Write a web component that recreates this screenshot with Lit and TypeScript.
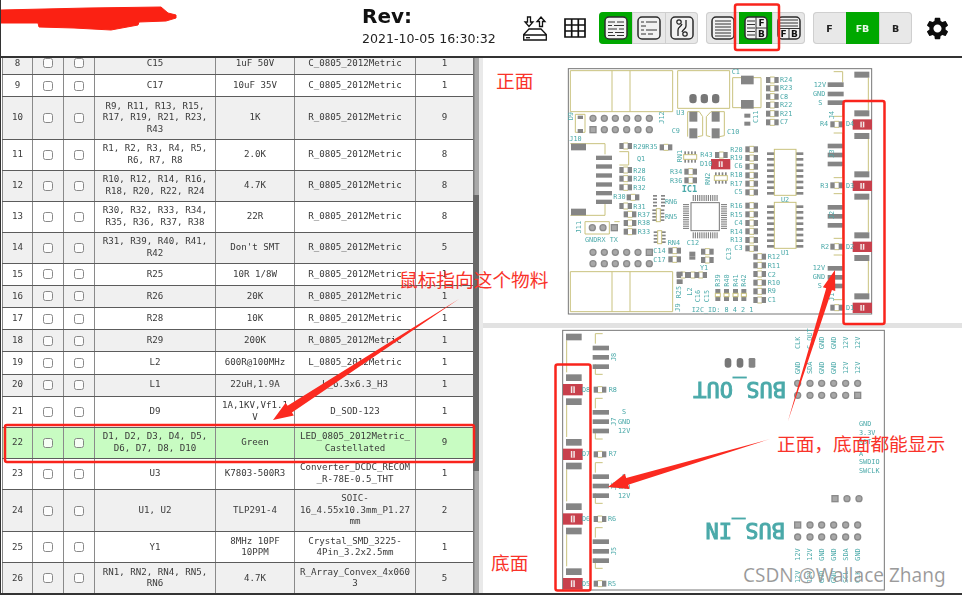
import { LitElement, html, css, svg } from 'lit';
import { customElement } from 'lit/decorators.js';

// num, references, value, footprint, quantity
const rows: [number, string, string, string, number][] = [
  [8, 'C15', '1uF 50V', 'C_0805_2012Metric', 1],
  [9, 'C17', '10uF 35V', 'C_0805_2012Metric', 1],
  [10, 'R9, R11, R13, R15,\nR17, R19, R21, R23,\nR43', '1K', 'R_0805_2012Metric', 9],
  [11, 'R1, R2, R3, R4, R5,\nR6, R7, R8', '2.0K', 'R_0805_2012Metric', 8],
  [12, 'R10, R12, R14, R16,\nR18, R20, R22, R24', '4.7K', 'R_0805_2012Metric', 8],
  [13, 'R30, R32, R33, R34,\nR35, R36, R37, R38', '22R', 'R_0805_2012Metric', 8],
  [14, 'R31, R39, R40, R41,\nR42', "Don't SMT", 'R_0805_2012Metric', 5],
  [15, 'R25', '10R 1/8W', 'R_0805_2012Metric', 1],
  [16, 'R26', '20K', 'R_0805_2012Metric', 1],
  [17, 'R28', '10K', 'R_0805_2012Metric', 1],
  [18, 'R29', '200K', 'R_0805_2012Metric', 1],
  [19, 'L2', '600R@100MHz', 'L_0805_2012Metric', 1],
  [20, 'L1', '22uH,1.9A', 'L_6.3x6.3_H3', 1],
  [21, 'D9', '1A,1KV,Vf1.1\nV', 'D_SOD-123', 1],
  [22, 'D1, D2, D3, D4, D5,\nD6, D7, D8, D10', 'Green', 'LED_0805_2012Metric_\nCastellated', 9],
  [23, 'U3', 'K7803-500R3', 'Converter_DCDC_RECOM\n_R-78E-0.5_THT', 1],
  [24, 'U1, U2', 'TLP291-4', 'SOIC-\n16_4.55x10.3mm_P1.27\nmm', 2],
  [25, 'Y1', '8MHz 10PF\n10PPM', 'Crystal_SMD_3225-\n4Pin_3.2x2.5mm', 1],
  [26, 'RN1, RN2, RN4, RN5,\nRN6', '4.7K', 'R_Array_Convex_4x060\n3', 5],
];

type Box = [number, number, number, number];
type Label = [string, number, number, number?];

const pads = (list: Box[]) => list.map(([x, y, w, h]) => svg`<rect class="pad" x=${x} y=${y} width=${w} height=${h} />`);
const stack = (x: number, w: number, h: number, ys: number[]) => pads(ys.map((y): Box => [x, y, w, h]));
const silk = (list: string[]) => list.map((p) => svg`<polyline class="silk" points=${p} />`);
const labels = (list: Label[]) =>
  list.map(([t, x, y, rot]) =>
    rot === undefined
      ? svg`<text class="ref" x=${x} y=${y}>${t}</text>`
      : svg`<text class="ref" x=${x} y=${y} transform="rotate(${rot} ${x} ${y})">${t}</text>`
  );
// two pad resistor footprint, x is the left edge, y the centre
const res = (x: number, y: number) => svg`
  <polyline class="silk" points="${x + 12},${y - 9} ${x + 26},${y - 9}" />
  <polyline class="silk" points="${x + 12},${y + 9} ${x + 26},${y + 9}" />
  <rect class="pad" x=${x} y=${y - 9} width="13" height="18" />
  <rect class="pad" x=${x + 25} y=${y - 9} width="13" height="18" />`;
const hole = (x: number, y: number, square = false) =>
  square
    ? svg`<rect class="hole" x=${x - 9} y=${y - 9} width="18" height="18" />`
    : svg`<circle class="hole" cx=${x} cy=${y} r="9" />`;
const led = (x: number, y: number, w = 58, h = 31) => svg`
  <rect class="led" x=${x} y=${y} width=${w} height=${h} />
  <rect x=${x + w / 2 - 6} y=${y + 7} width="12" height=${h - 14} fill="#f3e9e9" />
  <rect x=${x + w / 2 - 1.5} y=${y + 7} width="3" height=${h - 14} fill="#c8404c" />`;
const soic = (top: number) => svg`
  ${stack(858, 22, 8, [0, 1, 2, 3, 4, 5, 6, 7].map((i) => top + 9 + i * 17))}
  ${stack(945, 22, 8, [0, 1, 2, 3, 4, 5, 6, 7].map((i) => top + 9 + i * 17))}
  <rect class="silk" x="880" y=${top} width="65" height="138" />`;
const array = (x: number, y: number, vertical = false) =>
  vertical
    ? svg`${stack(x, 12, 5, [y, y + 10, y + 20, y + 30])}${stack(x + 24, 12, 5, [y, y + 10, y + 20, y + 30])}
        <rect class="silk" x=${x + 12} y=${y - 2} width="12" height="39" />`
    : svg`${[0, 1, 2, 3].map((i) => svg`<rect class="pad" x=${x + i * 10} y=${y} width="5" height="10" /><rect class="pad" x=${x + i * 10} y=${y + 24} width="5" height="10" />`)}
        <rect class="silk" x=${x - 2} y=${y + 10} width="39" height="14" />`;

function frontBoard() {
  const qfp = [0, 1, 2, 3, 4, 5, 6, 7, 8, 9, 10, 11];
  return svg`
    <svg viewBox="6 9 1440 792" width="480" height="264">
      <rect x="262" y="41" width="910" height="736" fill="#fff" stroke="#777" stroke-width="3" />
      ${silk([
        '268,47 575,47 575,170 268,170 268,47', '393,47 393,170', '447,47 447,170',
        '268,650 575,650 575,770 268,770 268,650', '393,650 393,770', '447,650 447,770',
        '590,47 746,47 746,160 590,160 590,47',
        '755,68 840,68 840,158 755,158 755,68',
        '268,266 372,266 372,298', '268,481 372,481 372,440',
        '283,178 312,178 312,232 283,232 283,178',
        '415,290 443,290 443,330 415,330',
        '620,170 655,170 665,185 665,242 650,245', '620,170 620,245',
        '676,185 690,170 730,170 730,242 715,245', '676,185 676,242 688,245',
        '312,500 385,500 385,537 312,537 312,500', '400,500 416,500',
        ...[50, 234, 416, 600].flatMap((b) => [
          `1058,${b} 1085,${b} 1085,${b + 32}`,
          `1085,${b + 102} 1085,${b + 134} 1058,${b + 134}`,
          `1162,${b + 18} 1162,${b + 116}`,
        ]),
      ])}
      ${stack(1120, 45, 18, [50, 166, 234, 349, 416, 532, 600, 715])}
      ${stack(1040, 48, 14, [82, 110, 136, 266, 293, 320, 450, 477, 504, 633, 660, 686])}
      ${pads([[270, 266, 45, 20], [270, 461, 45, 20], [290, 182, 16, 10], [290, 222, 16, 12], [780, 62, 38, 26], [780, 135, 38, 26], [790, 176, 18, 12], [790, 200, 18, 12]])}
      ${stack(345, 48, 13, [302, 328, 355, 382, 408, 434])}
      ${[625, 659, 693].map((x) => svg`<rect x=${x} y="117" width="22" height="28" rx="10" fill="#777" />`)}
      ${pads([[625, 170, 24, 30], [625, 220, 24, 30], [692, 170, 24, 30], [692, 220, 24, 30]])}
      ${[336, 370, 403, 437, 471, 505].map((x) => svg`${hole(x, 190)}${hole(x, 224, x === 336)}${hole(x, 592, x === 505)}${hole(x, 626)}`)}
      ${hole(334, 518)}${hole(366, 518)}${hole(400, 518, true)}
      ${[75, 100, 125, 150, 176, 202].map((y) => res(855, y))}
      ${[283, 309, 335, 361, 386, 412, 452, 478, 504, 529, 555, 580].map((y) => res(793, y))}
      ${[605, 631, 657, 683, 709, 735].map((y) => res(817, y))}
      ${([[415, 273], [536, 277], [415, 345], [415, 371], [415, 397], [437, 427], [415, 453], [428, 478], [428, 504], [428, 530], [610, 350], [610, 376], [702, 300], [562, 587], [562, 613], [587, 660], [617, 660], [640, 660], [660, 590], [660, 615], [1048, 208], [1048, 391], [1048, 575], [1048, 758]] as [number, number][]).map(([x, y]) => res(x, y))}
      ${[703, 729, 756, 781].map((x) => svg`${pads([[x, 702, 15, 13], [x, 725, 15, 13]])}<rect class="silk" x=${x} y="715" width="15" height="10" />`)}
      ${pads([[587, 650, 18, 14], [587, 673, 18, 14], [625, 590, 18, 14], [625, 604, 18, 10]])}
      ${stack(516, 12, 5, [420, 430, 440, 450])}${stack(540, 12, 5, [420, 430, 440, 450])}
      ${array(514, 463, true)}${array(518, 529, true)}${array(610, 289)}${array(702, 352)}
      <rect x="630" y="443" width="85" height="84" fill="#fff" stroke="#777" stroke-width="3" />
      ${qfp.map((i) => svg`
        <rect class="pad" x=${635 + i * 6.5} y="420" width="3.5" height="18" />
        <rect class="pad" x=${635 + i * 6.5} y="532" width="3.5" height="18" />
        <rect class="pad" x="606" y=${447 + i * 6.5} width="18" height="3.5" />
        <rect class="pad" x="720" y=${447 + i * 6.5} width="18" height="3.5" />`)}
      ${soic(283)}${soic(442)}
      ${led(690, 312)}${led(1115, 193)}${led(1115, 377)}${led(1115, 560)}${led(1115, 743)}
      ${labels([
        ['R24', 897, 81], ['R23', 897, 106], ['C8', 897, 131], ['R22', 897, 157], ['R21', 897, 182], ['C7', 897, 208],
        ['R20', 748, 291], ['R19', 748, 314], ['C6', 760, 340], ['R18', 748, 366], ['R17', 748, 392], ['C5', 760, 417],
        ['R16', 748, 459], ['R15', 748, 485], ['C4', 760, 511], ['R14', 748, 536], ['R13', 748, 561], ['C3', 760, 586],
        ['R12', 860, 612], ['R11', 860, 639], ['C2', 860, 665], ['R10', 860, 691], ['R9', 860, 715], ['C1', 860, 741],
        ['R29', 457, 281], ['R35', 493, 281], ['R28', 457, 353], ['R26', 457, 379], ['R32', 457, 405], ['Q1', 468, 317],
        ['R30', 397, 433], ['R31', 457, 461], ['R37', 470, 485], ['R38', 470, 511], ['R33', 470, 536],
        ['R34', 567, 357], ['R36', 567, 383], ['R43', 658, 307], ['D10', 657, 333], ['RN6', 552, 447], ['RN5', 552, 491],
        ['RN4', 560, 571], ['C12', 617, 571], ['C14', 517, 594], ['C17', 517, 621], ['GNDRX TX', 312, 561],
        ['U2', 900, 441], ['U1', 900, 600], ['C9', 572, 233], ['C10', 738, 237], ['U3', 586, 179], ['C1', 752, 56],
        ['J10', 265, 258], ['Y1', 657, 645], ['I2C_ID: 8 4 2 1', 632, 771],
        ['12V', 998, 97], ['GND', 996, 123], ['S', 1012, 150], ['R4', 1017, 213], ['D4', 1095, 214],
        ['R3', 1018, 398], ['D3', 1095, 398], ['R2', 1020, 582], ['D2', 1095, 582], ['12V', 995, 646], ['GND', 995, 673],
        ['S', 1010, 700], ['D1', 1095, 765],
        ['C11', 830, 204, -90], ['J12', 548, 206, -90], ['D9', 277, 196, -90], ['J11', 300, 535, -90], ['RN1', 603, 322, -90],
        ['RN2', 688, 390, -90], ['C13', 750, 615, -90], ['R25', 600, 730, -90], ['L2', 632, 722, -90], ['C16', 656, 742, -90],
        ['C15', 684, 742, -90], ['J9', 596, 770, -90], ['R39', 717, 695, -90], ['R40', 743, 695, -90], ['R41', 770, 695, -90],
        ['R42', 795, 695, -90], ['J4', 1060, 192, -90], ['J3', 1060, 308, -90], ['J2', 1060, 492, -90], ['J1', 1060, 738, -90],
      ])}
      <text class="ref big" x="602" y="412">IC1</text>
    </svg>`;
}

function backBoard() {
  const tx = [950, 987, 1022, 1058, 1094, 1130];
  return svg`
    <svg viewBox="6 9 1440 792" width="480" height="264">
      <rect x="245" y="16" width="965" height="779" fill="#fff" stroke="#777" stroke-width="3" />
      ${silk([26, 220, 413, 608].flatMap((b) => [
        `365,${b} 343,${b} 343,${b + 30}`,
        `343,${b + 92} 343,${b + 122} 365,${b + 122}`,
        `257,${b + 20} 257,${b + 116}`,
      ]))}
      ${stack(255, 47, 20, [26, 148, 220, 342, 413, 535, 608, 730])}
      ${stack(335, 49, 14, [62, 90, 118, 255, 283, 311, 448, 476, 505, 643, 672, 700])}
      ${[194, 388, 582, 776].map((y) => res(338, y))}
      ${[177, 371, 565, 759].map((y) => led(246, y, 59, 34))}
      ${[731, 767].map((x) => svg`<rect x=${x} y="99" width="20" height="29" rx="9" fill="#777" />`)}
      <rect class="pad" x="803" y="99" width="20" height="29" rx="4" />
      ${tx.map((x, i) => svg`${hole(x, 175)}${hole(x, 211, i === 5)}${hole(x, 600, i === 0)}${hole(x, 636)}`)}
      ${hole(1062, 521, true)}${hole(1098, 521)}${hole(1134, 521)}
      <text class="ref bus" transform="rotate(180 915 170)" x="915" y="170">BUS_OUT</text>
      <text class="ref bus" transform="rotate(180 912 595)" x="912" y="595">BUS_IN</text>
      ${labels([
        ['R8', 383, 200], ['D8', 303, 200], ['R7', 383, 393], ['D7', 303, 393], ['R6', 381, 589], ['D6', 303, 589], ['R5', 381, 782], ['D5', 303, 782],
        ['S', 423, 268], ['GND', 411, 296], ['12V', 411, 324], ['S', 423, 462], ['GND', 411, 491], ['12V', 411, 518],
        ['GND', 1134, 304], ['3.3V', 1134, 331], ['RST', 1134, 358], ['A', 1134, 392], ['SWDIO', 1134, 418], ['SWCLK', 1134, 445],
        ['J8', 404, 108, -90], ['J7', 404, 302, -90], ['J6', 404, 495, -90], ['J5', 404, 690, -90],
        ...(['CLK', 'C_OUT', 'GND', 'GND', '12V', '12V'].map((t, i): Label => [t, tx[i] + 6, 72, -90])),
        ...(['GND', 'SDA', 'GND', 'GND', '12V', '12V'].map((t, i): Label => [t, tx[i] + 6, 147, -90])),
        ...(['12V', '12V', 'GND', 'GND', 'SDA', 'GND'].map((t, i): Label => [t, tx[i] + 6, 707, -90])),
        ...(['12V', '12V', 'GND', 'GND', 'SCL', 'CLK'].map((t, i): Label => [t, tx[i] + 6, 774, -90])),
      ])}
    </svg>`;
}

// tapered hand drawn arrow: thin at the tail, wide just before the head
function arrow(x1: number, y1: number, x2: number, y2: number, neck: number, headLen: number, headW: number) {
  const len = Math.hypot(x2 - x1, y2 - y1);
  const ux = (x2 - x1) / len;
  const uy = (y2 - y1) / len;
  const bx = x2 - ux * headLen;
  const by = y2 - uy * headLen;
  const off = (k: number) => [-uy * k, ux * k];
  const [nx, ny] = off(neck / 2);
  const [hx, hy] = off(headW / 2);
  const pts = [
    [x1, y1], [bx + nx, by + ny], [bx + hx, by + hy], [x2, y2], [bx - hx, by - hy], [bx - nx, by - ny],
  ];
  return svg`<polygon fill="#fb2a20" points=${pts.map((p) => p.join(',')).join(' ')} />`;
}

const frame = (inner: unknown) => svg`
  <svg class="ico" viewBox="0 0 24 24" width="24" height="24">
    <rect x="1" y="1" width="22" height="22" rx="4" fill="#f1f1f1" stroke="#2b2b2b" stroke-width="1.5" />
    ${inner}
  </svg>`;
const lines = (list: string[]) => list.map((d) => svg`<path d=${d} stroke="#333" stroke-width="1" fill="none" />`);
const letter = (t: string, x: number, y: number) => svg`<text class="letter" x=${x} y=${y}>${t}</text>`;

const icons = {
  bomSplit: frame(lines(['M4 6h7M13 6h7', 'M4 9.500h4M10 9.500h10', 'M4 13h9M15 13h5', 'M4 16.500h5M11 16.500h9', 'M4 19.500h7M13 19.500h7'])),
  bomTree: frame(lines(['M4 6h3M9 6h11', 'M4 10h5', 'M4 14h3M9 14h11', 'M4 18h5M11 18h5'])),
  netlist: frame(svg`<path d="M8 20V14c0-3 3-3 4-6M16 4v6c0 3-3 3-4 6" stroke="#222" stroke-width="1.300" fill="none" /><circle cx="9" cy="6" r="2.200" fill="none" stroke="#222" stroke-width="1.200" /><circle cx="15" cy="18" r="2.200" fill="none" stroke="#222" stroke-width="1.200" />`),
  listOnly: frame(lines(['M4 5h16', 'M4 8h16', 'M4 11h16', 'M4 14h16', 'M4 17h16', 'M4 20h16'])),
  listFb: frame(svg`
    ${lines(['M3 5h8', 'M3 8.500h8', 'M3 12h8', 'M3 15.500h8', 'M3 19h8', 'M12 1v22', 'M12 12h11'])}
    ${letter('F', 17.500, 10)}${letter('B', 17.500, 21)}`),
  listTop: frame(svg`
    ${lines(['M3 4h18', 'M3 7h18', 'M3 10h18', 'M1 12.500h22', 'M12 12.500v10.500'])}
    ${letter('F', 6.500, 21)}${letter('B', 17.500, 21)}`),
};

// fullwidth comma, as in the annotation
const bothSides = '\u6B63\u9762\uFF0C\u5E95\u9762\u90FD\u80FD\u663E\u793A';

@customElement('app-root')
export class AppRoot extends LitElement {
  static styles = css`
    :host {
      display: block;
      position: relative;
      width: 962px;
      height: 595px;
      overflow: hidden;
      background: #fff;
      font-family: 'DejaVu Sans', sans-serif;
    }

    .page {
      display: flex;
      flex-direction: column;
      height: 595px;
      box-sizing: border-box;
      border-left: 1px solid #333;
      border-bottom: 2px solid #333;
      filter: blur(0.35px);
    }

    header {
      flex: 0 0 56px;
      display: flex;
      align-items: center;
      border-bottom: 2px solid #333;
      box-sizing: content-box;
    }

    .scribble {
      flex: 0 0 361px;
      height: 56px;
    }

    .rev {
      flex: 0 0 161px;
      align-self: flex-start;
      padding-top: 4px;
    }

    .rev b {
      display: block;
      font-size: 20px;
      line-height: 24px;
      color: #111;
    }

    .rev span {
      display: block;
      margin-top: 3px;
      font-size: 12.600px;
      line-height: 15px;
      color: #222;
    }

    .tool {
      display: block;
      flex: none;
    }

    .grid-ico {
      margin: 0 13px 0 17px;
    }

    .group {
      display: flex;
      height: 32px;
      margin-right: 8px;
      border-radius: 4px;
      overflow: hidden;
      background: #e8e8e8;
      box-shadow: inset 0 0 0 1px #cfcfcf;
    }

    .btn {
      width: 33px;
      height: 32px;
      display: flex;
      align-items: center;
      justify-content: center;
      font-size: 9.500px;
      font-weight: 700;
      color: #222;
    }

    .group .btn + .btn {
      box-shadow: inset 1px 0 0 #cfcfcf;
    }

    .group .btn.on {
      background: #00a800;
      color: #eaf8ea;
      box-shadow: none;
    }

    .gear {
      margin-left: 4px;
    }

    main {
      flex: 1;
      display: flex;
      min-height: 0;
    }

    .bom {
      flex: 0 0 472px;
      overflow: hidden;
    }

    table {
      table-layout: fixed;
      width: 471px;
      margin: -6.200px 0 0 1px;
      border-collapse: collapse;
      font-family: 'DejaVu Sans Mono', monospace;
      font-size: 9.150px;
      line-height: 11.500px;
      color: #3a3a3a;
    }

    td {
      height: 22.200px;
      padding: 3.500px 1px;
      border: 1px solid #5c5c5c;
      border-top-color: #4a4a4a;
      border-left-color: #8a8a8a;
      border-right-color: #8a8a8a;
      text-align: center;
      white-space: pre-line;
      box-sizing: border-box;
    }

    tr.even td {
      background: #f0f0f0;
    }

    tr.hit td {
      background: #c8fcc2;
    }

    input {
      display: block;
      width: 10px;
      height: 10px;
      margin: 0 auto;
      opacity: 0.85;
    }

    .track {
      flex: 0 0 6px;
      background: #a9a9a9;
      box-shadow: inset 1.500px 0 0 #7a7a7a;
    }

    .thumb {
      height: 276px;
      margin-top: 137px;
      background: #686868;
    }

    .rail {
      flex: 0 0 4px;
      background: #e9e9e9;
    }

    .boards {
      flex: 1;
      display: flex;
      flex-direction: column;
      min-width: 0;
    }

    .board {
      height: 265px;
      overflow: hidden;
    }

    .split {
      flex: 0 0 5px;
      background: #e2e2e2;
    }

    .board svg {
      display: block;
    }

    .pad {
      fill: #858585;
    }

    .hole {
      fill: #a8a8a8;
      stroke: #8a8a8a;
      stroke-width: 4;
    }

    .led {
      fill: #c8404c;
    }

    .silk {
      fill: none;
      stroke: #c9c27e;
      stroke-width: 3;
    }

    .ref {
      fill: #4aa9a9;
      font-family: 'DejaVu Sans Mono', monospace;
      font-size: 20.500px;
    }

    .big {
      font-size: 26px;
      font-weight: 700;
    }

    .bus {
      font-size: 66px;
      font-weight: 400;
      stroke: #4aa9a9;
      stroke-width: 3;
    }

    .letter {
      font: 700 9px 'DejaVu Sans', sans-serif;
      fill: #111;
      text-anchor: middle;
    }

    .marks {
      position: absolute;
      left: 0;
      top: 0;
      pointer-events: none;
    }

    .note {
      font-family: 'Noto Sans CJK SC', sans-serif;
      font-size: 18.700px;
      fill: #f9332a;
    }

    .box {
      fill: none;
      stroke: #f9241c;
      stroke-width: 2.500;
    }

    .mark {
      font-family: 'Noto Sans', sans-serif;
      font-size: 19px;
      fill: #7d7d7d;
      fill-opacity: 0.85;
      stroke: #fff;
      stroke-opacity: 0.35;
      stroke-width: 0.600px;
    }
  `;

  render() {
    return html`
      <div class="page">
        <header>
          <svg class="scribble" viewBox="0 0 361 56">
            <path
              d="M0 10L87 8 160 7 167 13 175 15 175 18 165 21 138 22 137 25 110 30 73 28 38 27 37 23 0 23z"
              fill="#fb2113"
              stroke="#fb2113"
              stroke-linejoin="round"
            />
          </svg>
          <div class="rev">
            <b>Rev:</b>
            <span>2021-10-05 16:30:32</span>
          </div>
          <svg class="tool" viewBox="0 0 24 25" width="24" height="25" fill="none" stroke="#111" stroke-width="1.300">
            <path d="M4.500 1h3v5h2.500L6 10.500 2 6h2.500zM16.500 10.500h3v-5H22L18 1l-4 4.500h2.500z" />
            <path d="M.700 24v-5.500L6 13h12l5.300 5.500V24zM.700 19h22.600" />
            <path d="M3 21.700h4" />
          </svg>
          <svg class="tool grid-ico" viewBox="0 0 22 20" width="22" height="20" fill="none" stroke="#111" stroke-width="1.700">
            <path d="M1 1h20v18H1zM1 7h20M1 13h20M7.700 1v18M14.300 1v18" />
          </svg>
          <div class="group">
            <div class="btn on">${icons.bomSplit}</div>
            <div class="btn">${icons.bomTree}</div>
            <div class="btn">${icons.netlist}</div>
          </div>
          <div class="group">
            <div class="btn">${icons.listOnly}</div>
            <div class="btn on">${icons.listFb}</div>
            <div class="btn">${icons.listTop}</div>
          </div>
          <div class="group">
            <div class="btn">F</div>
            <div class="btn on">FB</div>
            <div class="btn">B</div>
          </div>
          <svg class="tool gear" viewBox="0 0 24 24" width="27" height="27" fill="#0c0c0c">
            <path
              d="M19.140 12.940c.04-.3.06-.61.06-.94 0-.32-.02-.64-.07-.94l2.030-1.580c.18-.14.23-.41.12-.61l-1.920-3.320c-.12-.22-.37-.29-.59-.22l-2.390.96c-.5-.38-1.030-.7-1.620-.94l-.36-2.540c-.04-.24-.24-.41-.48-.41h-3.840c-.24 0-.43.17-.47.41l-.36 2.540c-.59.24-1.130.57-1.620.94l-2.390-.96c-.22-.08-.47 0-.59.22L2.740 8.870c-.12.21-.08.47.12.61l2.030 1.580c-.05.3-.09.63-.09.94s.02.64.07.94l-2.030 1.580c-.18.14-.23.41-.12.61l1.920 3.320c.12.22.37.29.59.22l2.390-.96c.5.38 1.030.7 1.620.94l.36 2.540c.05.24.24.41.48.41h3.840c.24 0 .44-.17.47-.41l.36-2.540c.59-.24 1.130-.56 1.620-.94l2.390.96c.22.08.47 0 .59-.22l1.920-3.320c.12-.22.07-.47-.12-.61l-2.010-1.580zM12 15.600c-1.980 0-3.600-1.620-3.600-3.600s1.620-3.600 3.600-3.600 3.600 1.620 3.600 3.600-1.620 3.600-3.600 3.600z"
            />
          </svg>
        </header>
        <main>
          <div class="bom">
            <table>
              <colgroup>
                <col style="width:30px" /><col style="width:31px" /><col style="width:31px" /><col style="width:121px" />
                <col style="width:79px" /><col style="width:121px" /><col style="width:58px" />
              </colgroup>
              ${rows.map(
                ([n, refs, val, fp, qty]) => html`
                  <tr class="${n === 22 ? 'hit' : n % 2 === 0 ? 'even' : ''}">
                    <td>${n}</td>
                    <td><input type="checkbox" /></td>
                    <td><input type="checkbox" /></td>
                    <td>${refs}</td>
                    <td>${val}</td>
                    <td>${fp}</td>
                    <td>${qty}</td>
                  </tr>
                `
              )}
            </table>
          </div>
          <div class="track"><div class="thumb"></div></div>
          <div class="rail"></div>
          <div class="boards">
            <div class="board">${frontBoard()}</div>
            <div class="split"></div>
            <div class="board">${backBoard()}</div>
          </div>
        </main>
      </div>
      <svg class="marks" viewBox="0 0 962 595" width="962" height="595">
        <rect class="box" x="5" y="425" width="469" height="37" rx="2" />
        <rect class="box" x="735" y="4.500" width="44" height="45.500" rx="2" />
        <rect class="box" x="843.500" y="101" width="41" height="223" rx="2" />
        <rect class="box" x="555.500" y="364.500" width="35" height="226" rx="2" />
        ${arrow(459, 299, 273, 420, 8, 20, 15)}
        ${arrow(788, 421, 835, 270, 6, 20, 13)}
        ${arrow(770, 439, 608, 487, 7, 20, 16)}
        <text class="note" x="496" y="88">正面</text>
        <text class="note" x="399" y="287">鼠标指向这个物料</text>
        <text class="note" x="777" y="451">${bothSides}</text>
        <text class="note" x="491" y="570">底面</text>
        <text class="mark" x="743" y="582">CSDN @Wallace Zhang</text>
      </svg>
    `;
  }
}
